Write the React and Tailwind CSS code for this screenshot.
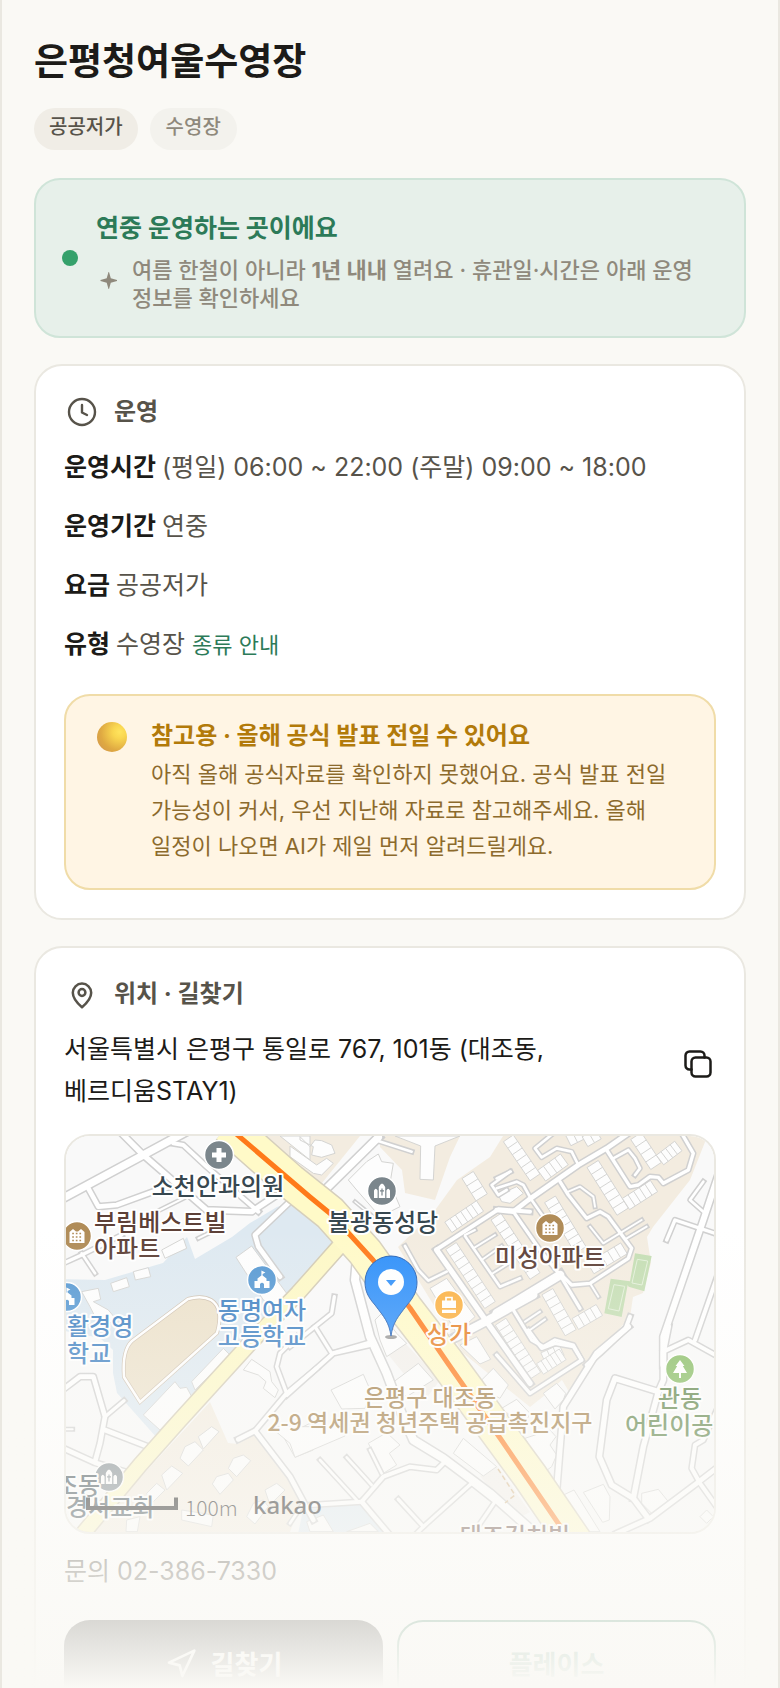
import React from "react";
import { Navigation } from "lucide-react";

/* ---------- Map data: each sheet has its own origin, three units per pixel ---------- */

const SHEETS = {
  A: "translate(50 1120) scale(0.33333)",
  B: "translate(290 1120) scale(0.33333)",
  C: "translate(500 1120) scale(0.33333)",
  D: "translate(50 1330) scale(0.33333)",
  E: "translate(290 1330) scale(0.33333)",
  F: "translate(500 1330) scale(0.33333)",
};

const ROADS = [
  ["A", 32, "M40 234L280 105L400 40"],
  ["A", 26, "M215 40L280 105L470 270L605 275L680 225"],
  ["A", 22, "M370 70L400 75L470 140L625 275"],
  ["A", 24, "M115 205L145 260L200 255L310 215L360 200"],
  ["A", 24, "M725 240L615 345L625 380L690 470"],
  ["A", 20, "M40 430L95 405L215 345"],
  ["A", 18, "M95 400L135 460"],
  ["A", 16, "M330 270L400 235"],
  ["A", 16, "M445 355L500 328"],
  ["B", 32, "M265 52L105 210"],
  ["B", 18, "M255 60L365 95"],
  ["B", 18, "M345 378L385 450L415 482L470 455"],
  ["B", 18, "M660 155L605 195L625 225L650 210"],
  ["B", 26, "M440 390L590 605L720 790"],
  ["B", 22, "M440 388L625 268L720 275"],
  ["B", 18, "M525 348L630 500L690 475"],
  ["B", 16, "M525 345L555 330"],
  ["B", 16, "M550 385L615 345"],
  ["B", 16, "M575 420L635 378"],
  ["B", 16, "M605 462L660 428"],
  ["B", 34, "M730 525L580 608L500 650"],
  ["B", 20, "M0 680L75 620L125 580L133 530"],
  ["B", 20, "M75 620L125 700L245 665"],
  ["B", 14, "M195 245L250 290"],
  ["C", 24, "M-10 270L40 275L85 240L235 135L320 85L385 40"],
  ["C", 18, "M155 44L105 85L125 112L170 85L215 95L235 135"],
  ["C", 18, "M-10 175L32 155"],
  ["C", 18, "M-10 205L50 185L70 195L95 240L130 290"],
  ["C", 20, "M320 90L390 200L415 195L450 170L475 172L490 190L565 150L580 100L545 40"],
  ["C", 18, "M340 115L385 90L405 115L420 145L405 165"],
  ["C", 20, "M180 185L205 225L260 295L300 275L325 290L395 385L385 415L270 490L215 495L180 460"],
  ["C", 16, "M205 215L240 200L280 230L285 260"],
  ["C", 16, "M270 320L310 370L425 300"],
  ["C", 16, "M375 358L440 320"],
  ["C", 20, "M40 275L120 390L180 465"],
  ["C", 36, "M-10 580L180 465"],
  ["C", 20, "M180 465L240 565"],
  ["C", 16, "M270 490L295 530"],
  ["C", 20, "M40 570L95 660L130 680L165 660L220 675L245 720"],
  ["C", 16, "M75 605L120 575"],
  ["C", 16, "M90 630L135 598"],
  ["C", 22, "M390 590L375 630L300 700L260 735"],
  ["C", 18, "M610 185L570 240L615 280"],
  ["C", 28, "M650 180L610 300L490 650L490 735"],
  ["C", 20, "M500 360L525 300L650 342"],
  ["C", 22, "M655 460L585 660"],
  ["C", 22, "M490 695L565 660L655 710"],
  ["D", 24, "M40 178L90 140L130 140L165 260L150 340L135 395"],
  ["D", 20, "M165 260L222 212"],
  ["D", 24, "M165 300L320 360"],
  ["D", 24, "M40 355L135 398L240 430"],
  ["D", 16, "M40 298L68 298"],
  ["D", 24, "M565 328L615 303L720 440L790 570"],
  ["D", 22, "M615 303L710 190L800 115"],
  ["D", 20, "M710 190L680 110L690 70L740 20"],
  ["D", 18, "M720 580L760 520"],
  ["E", 34, "M200 -205L195 -150L240 20L290 130L335 250L370 330L460 385L600 490L730 605"],
  ["E", 22, "M-10 195L130 70L240 45"],
  ["E", 18, "M90 390L200 510"],
  ["E", 18, "M170 382L245 465"],
  ["E", 18, "M240 360L275 430"],
  ["E", 22, "M60 525L215 515L280 440L360 410L440 420L465 395"],
  ["E", 24, "M215 515L295 610"],
  ["E", 20, "M325 508L400 590L545 460"],
  ["E", 20, "M380 610L400 590"],
  ["E", 20, "M545 460L615 515L550 610"],
  ["F", 26, "M385 -10L290 70L190 230L170 480"],
  ["F", 26, "M505 -10L490 65L490 150L475 185L430 350L400 505"],
  ["F", 26, "M475 185L345 145L320 210L298 380L335 465L400 505L445 565"],
  ["F", 24, "M350 610L450 565L590 460L655 410"],
  ["F", 22, "M655 230L610 330L585 345L575 415L600 460L650 530"],
  ["F", 20, "M-10 75L90 190L245 90L220 50L165 40L125 55L85 0"],
];

const BUILDINGS = [
  ["A", "335,390 400,355 410,385 345,415"],
  ["A", "250,455 295,443 302,470 256,480"],
  ["A", "182,490 230,473 238,500 190,515"],
  ["A", "558,412 605,378 710,520 690,560 640,540"],
  ["A", "95,515 145,505 152,538 130,545 175,570 200,600 150,620 120,560"],
  ["A", "690,48 780,48 780,120"],
  ["B", "30,50 60,80 75,60 95,62 125,75 135,100 95,112 65,105 70,80 30,60"],
  ["B", "0,78 80,135 110,115 130,130 95,165 70,160 0,110"],
  ["B", "175,180 230,125 265,102 275,125 310,130 300,190 330,260 270,290 200,210"],
  ["B", "315,48 510,48 435,78 430,180 390,178 392,78"],
  ["B", "420,505 470,475 555,590 500,640"],
  ["B", "625,225 680,200 700,220 660,250 635,245"],
  ["B", "255,600 275,580 320,640 350,670 290,710 270,660"],
  ["D", "280,255 375,155 390,175 410,172 425,200 330,300"],
  ["D", "425,155 520,55 540,75 435,180"],
  ["D", "580,120 605,88 660,125 665,155 685,180 675,203 640,175 648,155 625,135"],
  ["D", "700,320 780,280 790,360 735,382"],
  ["D", "445,320 485,290 507,305 460,357"],
  ["D", "390,385 405,350 435,335 460,360 415,408"],
  ["D", "335,435 365,408 398,430 350,480"],
  ["D", "290,490 320,460 345,480 305,520"],
  ["D", "535,415 550,385 580,375 602,392 560,440"],
  ["D", "487,462 500,440 535,430 550,450 510,493"],
  ["D", "645,480 680,460 705,480 660,525"],
  ["D", "590,560 610,520 640,510 655,530 615,582"],
  ["D", "395,540 490,555 485,590 395,570"],
  ["D", "230,570 270,560 262,605 228,605"],
  ["E", "123,180 220,133 245,190 225,235 155,237"],
  ["E", "-60,290 0,340 15,382 165,318 160,290"],
  ["E", "235,340 290,308 330,345 298,370 320,405 280,430"],
  ["E", "50,575 100,555 130,605 60,605"],
  ["E", "170,605 240,580 265,605"],
  ["E", "490,370 520,325 620,410 580,438"],
  ["E", "305,160 385,100 430,150 350,200"],
  ["E", "510,45 560,20 602,88 570,102"],
  ["E", "575,150 610,115 655,165 630,205 600,190"],
  ["E", "635,235 680,208 720,250 700,290"],
  ["F", "130,190 170,160 197,190 190,210 165,237"],
  ["F", "250,487 310,463 330,500 328,570 308,577"],
  ["F", "180,500 222,480 300,605 240,605"],
  ["F", "425,490 475,478 505,515 455,550 425,520"],
  ["F", "75,325 150,300 168,320 150,345 170,375 155,410 135,425"],
  ["F", "600,560 620,540 640,560 620,580"],
];

/* sheet, x1, y1, x2, y2, number of houses, depth */
const TERRACES = [
  ["C", 25, 55, 105, 172, 6, 36],
  ["C", 125, 167, 193, 118, 4, 40],
  ["C", 278, 132, 368, 275, 7, 40],
  ["C", 378, 252, 462, 198, 5, 40],
  ["C", 408, 48, 468, 138, 4, 38],
  ["C", 480, 120, 535, 78, 4, 36],
  ["C", 150, 238, 242, 390, 8, 38],
  ["C", 272, 445, 372, 385, 5, 38],
  ["C", 142, 515, 212, 638, 6, 38],
  ["C", 226, 612, 298, 570, 4, 38],
  ["C", 205, 62, 245, 42, 2, 34],
  ["C", 255, 65, 295, 42, 2, 34],
  ["C", -12, 290, 105, 468, 9, 36],
  ["C", 130, 715, 185, 690, 3, 36],
  ["F", 2, -25, 106, 137, 9, 38],
  ["F", 120, 117, 188, 73, 5, 38],
  ["B", 533, 165, 575, 232, 3, 40],
  ["B", 475, 322, 570, 258, 6, 38],
  ["B", 483, 378, 600, 555, 9, 38],
];

function Terrace({ x1, y1, x2, y2, n, depth }) {
  const length = Math.hypot(x2 - x1, y2 - y1);
  const nx = (-(y2 - y1) / length) * (depth / 2);
  const ny = ((x2 - x1) / length) * (depth / 2);
  const walls = [];
  for (let i = 1; i < n; i++) {
    const x = x1 + ((x2 - x1) * i) / n;
    const y = y1 + ((y2 - y1) * i) / n;
    walls.push(`M${x + nx} ${y + ny}L${x - nx} ${y - ny}`);
  }
  return (
    <path
      d={`M${x1 + nx} ${y1 + ny}L${x2 + nx} ${y2 + ny}L${x2 - nx} ${y2 - ny}L${x1 - nx} ${y1 - ny}Z${walls.join("")}`}
    />
  );
}

function Glyph({ kind }) {
  if (kind === "hospital") return <path d="M-2.5-7h5v4.500h4.500v5h-4.500V7h-5V2.500H-7v-5h4.500z" fill="#fff" />;
  if (kind === "apartment")
    return (
      <g>
        <path d="M-7.500 7V-4l3.500-3 3 2.500h2L4-7l3.500 3V7z" fill="#fff" />
        <path d="M-4.800-2.500H6M-4.800 1H6M-4.800 4.500H6" stroke="#b08c58" strokeWidth="1.700" strokeDasharray="1.700 1.900" />
      </g>
    );
  if (kind === "church")
    return (
      <g>
        <path d="M-3.200 7V-4Q0-11 3.200-4V7zM-8 7V-.5Q-6.200-4-4.400-.5V7zM4.400 7V-.5Q6.200-4 8-.5V7z" fill="#fff" />
        <path d="M0-2.500v7M-2-.2h4" stroke="#7b868c" strokeWidth="1.200" />
      </g>
    );
  if (kind === "school")
    return (
      <path
        d="M-7.500 8V1h3v-2.500L-.6-4.500V-9.500l4 2-2.800 1.500v1.500L4.500-1.500V1h3v7H2V4Q0 1.500-2 4v4z"
        fill="#fff"
      />
    );
  if (kind === "bag")
    return (
      <g>
        <path d="M-7-4.500H7V3H-7zM-7 4.800H7V8H-7z" fill="#fff" />
        <path d="M-3-4V-7.500H3V-4" fill="none" stroke="#fff" strokeWidth="1.700" />
      </g>
    );
  return <path d="M0-9l4.500 6H2.800L7 4H1v5h-2V4h-6l4.200-7h-1.700z" fill="#fff" />;
}

const PLACES = [
  ["hospital", 219, 1155, "#7b868c"],
  ["apartment", 77, 1236, "#b08c58"],
  ["school", 262, 1280, "#5799d3"],
  ["school", 67, 1297, "#5799d3"],
  ["church", 382, 1191, "#7b868c"],
  ["apartment", 550, 1228, "#b08c58"],
  ["bag", 449, 1305, "#fbb040"],
  ["tree", 680, 1369, "#86bc62"],
  ["church", 109, 1477, "#7b868c"],
];

/* text, x, baseline, colour, anchor, size */
const LABELS = [
  ["소천안과의원", 218, 1195, "#37474f", "middle", 24],
  ["부림베스트빌", 94, 1231, "#5d4037", "start", 24],
  ["아파트", 94, 1257, "#5d4037", "start", 24],
  ["불광동성당", 383, 1231, "#37474f", "middle", 24],
  ["미성아파트", 550, 1266, "#5d4037", "middle", 24],
  ["동명여자", 262, 1319, "#3d80c2", "middle", 24],
  ["고등학교", 262, 1345, "#3d80c2", "middle", 24],
  ["활경영", 67, 1335, "#3d80c2", "start", 24],
  ["학교", 67, 1362, "#3d80c2", "start", 24],
  ["상가", 449, 1343, "#e67e22", "middle", 24],
  ["은평구 대조동", 430, 1406, "#a07c46", "middle", 23],
  ["2-9 역세권 청년주택 공급촉진지구", 430, 1431, "#a07c46", "middle", 23],
  ["관동", 680, 1407, "#5c8246", "middle", 24],
  ["어린이공", 625, 1434, "#5c8246", "start", 24],
  ["조동", 56, 1494, "#37474f", "start", 24],
  ["경서교회", 66, 1516, "#37474f", "start", 24],
  ["대조김치빌", 515, 1545, "#5d4037", "middle", 24],
];

const MAIN_ROAD = "M228 1126L290 1181L330 1213L365 1252L405 1308L445 1360L530 1476L575 1542";
const SIDE_ROAD = "M345 1240L298 1293L252 1341L180 1420L140 1465L76 1542";

function LocationMap() {
  return (
    <svg
      viewBox="66 1136 648 396"
      preserveAspectRatio="xMidYMid slice"
      className="block h-full w-full font-['Noto_Sans_CJK_KR',sans-serif]"
      role="img"
      aria-label="지도"
    >
      <rect x="0" y="1100" width="800" height="460" fill="#f9f9f9" />
      <g fill="#f3ece0">
        <polygon points="267,1136 360,1136 322,1183 290,1157" />
        <polygon points="380,1136 460,1136 450,1157 435,1200 405,1193 402,1170 380,1147" />
        <polygon points="503,1136 490,1157 457,1180 433,1213 398,1247 463,1353 530,1407 545,1395 562,1380 572,1397 603,1347 630,1317 633,1297 643,1293 651,1263 647,1237 653,1227 690,1180 705,1142 705,1136" />
        <polygon points="210,1402 228,1443 238,1444 255,1432 303,1497 290,1532 90,1532" />
      </g>
      <polygon points="387,1353 402,1340 440,1380 425,1400" fill="#f3f0ec" />
      <polygon points="480,1476 497,1466 530,1512 515,1520" fill="#f3f0ec" />
      <g fill="#dee9f1">
        <polygon points="60,1279 105,1280 163,1263 187,1237 195,1259 232,1237 250,1223 277,1207 290,1202 310,1208 338,1242 290,1295 157,1438 117,1393 113,1373 113,1350 100,1338 60,1330" />
        <polygon points="303,1510 330,1507 362,1502 385,1534 298,1534" />
      </g>
      <path
        d="M188 1299Q202 1295 211 1300Q224 1308 217 1333L140 1402L124 1377Q122 1350 132 1341Z"
        fill="#ece1ca"
        stroke="#cdbfae"
        strokeWidth="4"
      />
      <path
        d="M188 1299Q202 1295 211 1300Q224 1308 217 1333L140 1402L124 1377Q122 1350 132 1341Z"
        fill="none"
        stroke="#fff"
        strokeWidth="2.500"
      />
      <g fill="#fdfdfd" stroke="#d4d4d2" strokeWidth="3">
        {BUILDINGS.map(([sheet, points], i) => (
          <polygon key={i} points={points} transform={SHEETS[sheet]} />
        ))}
        {TERRACES.map(([sheet, x1, y1, x2, y2, n, depth], i) => (
          <g key={i} transform={SHEETS[sheet]}>
            <Terrace x1={x1} y1={y1} x2={x2} y2={y2} n={n} depth={depth} />
          </g>
        ))}
      </g>
      <g fill="none" strokeLinejoin="round">
        {ROADS.map(([sheet, width, d], i) => (
          <path key={i} d={d} transform={SHEETS[sheet]} stroke="#d0d0d0" strokeWidth={width - 1} strokeLinecap="square" />
        ))}
        {ROADS.map(([sheet, width, d], i) => (
          <path key={i} d={d} transform={SHEETS[sheet]} stroke="#fff" strokeWidth={width - 10} strokeLinecap="round" />
        ))}
        <path d={SIDE_ROAD} stroke="#d3cbb5" strokeWidth="17" />
        <path d={MAIN_ROAD} stroke="#d6cfbc" strokeWidth="37" />
        <path d={SIDE_ROAD} stroke="#fdf8c6" strokeWidth="14" />
        <path d={MAIN_ROAD} stroke="#fffac8" strokeWidth="34" />
        <path d="M227 1126L310 1197L332 1215L373 1260L410 1308L447 1362L500 1438L571 1542" stroke="#ff7a1a" strokeWidth="5" />
        <path d="M498 1469L515 1495L505 1503" stroke="#d6b78a" strokeWidth="1.500" strokeDasharray="5 3" />
      </g>
      <g transform={SHEETS.C} fill="#c5deb4">
        <polygon points="405,400 455,408 433,514 386,500 383,495 365,591 313,580 332,476 390,484" />
        <g fill="none" stroke="#e4f0da" strokeWidth="3">
          <polygon points="412,418 443,423 426,495 396,489" />
          <polygon points="342,494 374,499 357,573 325,566" />
        </g>
      </g>
      {PLACES.map(([kind, x, y, colour], i) => (
        <g key={i} transform={`translate(${x} ${y})`}>
          <circle r="14.500" fill={colour} stroke="#fff" strokeWidth="1.500" />
          <Glyph kind={kind} />
        </g>
      ))}
      {LABELS.map(([text, x, y, colour, anchor, size], i) => (
        <text
          key={i}
          x={x}
          y={y}
          fontSize={size}
          fontWeight="500"
          fill={colour}
          textAnchor={anchor}
          stroke="#fff"
          strokeWidth="4"
          strokeLinejoin="round"
          paintOrder="stroke"
        >
          {text}
        </text>
      ))}
      <ellipse cx="391" cy="1337" rx="6" ry="2" fill="#000" opacity="0.400" />
      <path
        d="M391 1336C389 1322 384 1317 375 1305C368 1297 365 1291 365 1282A26 26 0 0 1 417 1282C417 1291 414 1297 407 1305C398 1317 393 1322 391 1336Z"
        fill="#2f90fa"
        stroke="#2460b4"
        strokeWidth="1"
      />
      <circle cx="391" cy="1282" r="13" fill="#fff" />
      <path d="M386 1280h10l-5 6z" fill="#2f90fa" />
      <path d="M88 1497.500V1508H176V1497.500" fill="none" stroke="#111" strokeWidth="4" />
      <text x="185" y="1516" fontSize="21" fontWeight="300" fill="#111">
        100m
      </text>
      <text x="253" y="1514" fontSize="24" fontWeight="500" fill="#111" className="font-['Noto_Sans',sans-serif]">
        kakao
      </text>
    </svg>
  );
}

/* ---------- Icons ---------- */

function ClockIcon() {
  return (
    <svg viewBox="0 0 36 36" className="size-9 shrink-0" fill="none" stroke="currentColor" strokeWidth="2.400" strokeLinecap="round" strokeLinejoin="round" aria-hidden="true">
      <circle cx="18" cy="18" r="13" />
      <path d="M18 11v7.500l5 2.500" />
    </svg>
  );
}

function PinIcon() {
  return (
    <svg viewBox="0 0 36 36" className="size-9 shrink-0" fill="none" stroke="currentColor" strokeWidth="2.500" strokeLinejoin="round" aria-hidden="true">
      <path d="M18 31.300C13 27 8.800 22 8.800 16.800a9.200 9.200 0 0 1 18.400 0C27.200 22 23 27 18 31.300Z" />
      <circle cx="18" cy="16.500" r="3.400" />
    </svg>
  );
}

function CopyIcon() {
  return (
    <svg viewBox="0 0 28 28" className="size-7" fill="none" stroke="currentColor" strokeWidth="2.500" strokeLinecap="round" strokeLinejoin="round" aria-hidden="true">
      <rect x="7.500" y="7.500" width="19" height="19" rx="4" />
      <path d="M7.500 19.500H5.500a4 4 0 0 1-4-4V5.500a4 4 0 0 1 4-4h11a4 4 0 0 1 4 4v2" />
    </svg>
  );
}

function SparkIcon() {
  return (
    <svg viewBox="0 0 24 24" className="mt-3 size-6 shrink-0" fill="currentColor" aria-hidden="true">
      <path d="M13 4L14.800 10.200L21 12V13L14.800 14.800L13 21H12.500L10.700 14.800L4.500 13V12L10.700 10.200L12.500 4Z" />
    </svg>
  );
}

/* ---------- Page ---------- */

function Card({ icon, title, children }) {
  return (
    <section className="rounded-[28px] border-2 border-[#eae8e1] bg-white p-7">
      <h2 className="flex h-9 items-center gap-3.5 text-2xl font-bold text-[#57534a]">
        {icon}
        {title}
      </h2>
      {children}
    </section>
  );
}

function Fact({ label, children }) {
  return (
    <div className="flex items-baseline gap-1.5">
      <dt className="font-bold text-[#1c1b18]">{label}</dt>
      <dd>{children}</dd>
    </div>
  );
}

export default function App() {
  return (
    <div className="relative h-screen overflow-hidden border-x-2 border-[#eae8e1] bg-[#faf9f5] font-['Inter','Noto_Sans_CJK_KR',sans-serif] break-keep text-[#57534a]">
      <main className="flex flex-col px-8 pt-9">
        <h1 className="text-[37px] leading-[52px] font-bold text-[#1c1b18]">은평청여울수영장</h1>
        <div className="mt-5 flex gap-3 text-xl leading-[38px] font-medium">
          <span className="rounded-full bg-[#f0ede6] px-[15px] pb-1">공공저가</span>
          <span className="rounded-full bg-[#f3f2ed] px-4 pb-1 text-[#8f897c]">수영장</span>
        </div>

        <section className="mt-7 flex items-center gap-[18px] rounded-[26px] border-2 border-[#cfe4d8] bg-[#e7f0ea] px-[26px] py-6">
          <span className="size-4 shrink-0 rounded-full bg-[#35a16b]" />
          <div>
            <h2 className="text-[25px] leading-[48px] font-bold text-[#2c7a58]">연중 운영하는 곳이에요</h2>
            <div className="mt-1 flex items-start gap-3 text-[#8f897c]">
              <SparkIcon />
              <p className="text-[22px] leading-7 font-medium">
                여름 한철이 아니라 <strong>1년 내내</strong> 열려요 · 휴관일·시간은 아래 운영 정보를 확인하세요
              </p>
            </div>
          </div>
        </section>

        <div className="mt-[26px] flex flex-col gap-[26px]">
          <Card icon={<ClockIcon />} title="운영">
            <dl className="mt-4 flex flex-col gap-[17px] text-[25px] leading-[42px]">
              <Fact label="운영시간">(평일) 06:00 ~ 22:00 (주말) 09:00 ~ 18:00</Fact>
              <Fact label="운영기간">연중</Fact>
              <Fact label="요금">공공저가</Fact>
              <Fact label="유형">
                수영장{" "}
                <a href="#types" className="text-[22px] text-[#2c7a58]">
                  종류 안내
                </a>
              </Fact>
            </dl>
            <aside className="mt-7 flex gap-6 rounded-[26px] border-2 border-[#f0dca8] bg-[#fff5e4] py-6 pr-8 pl-[31px]">
              <span className="mt-0.5 size-[30px] shrink-0 rounded-full bg-[radial-gradient(circle_at_75%_33%,#ffe45e_0%,#f9d650_22%,#dfa942_62%,#cf9350_100%)]" />
              <div>
                <h3 className="text-2xl leading-8 font-bold text-[#b27a0a]">참고용 · 올해 공식 발표 전일 수 있어요</h3>
                <p className="mt-1 text-[22px] leading-9 text-[#8c6a2c]">
                  아직 올해 공식자료를 확인하지 못했어요. 공식 발표 전일 가능성이 커서, 우선 지난해 자료로 참고해주세요. 올해 일정이 나오면 AI가 제일 먼저 알려드릴게요.
                </p>
              </div>
            </aside>
          </Card>

          <Card icon={<PinIcon />} title="위치 · 길찾기">
            <div className="mt-4 flex items-center justify-between gap-4 text-[25px] leading-[42px] text-[#1c1b18]">
              <p>서울특별시 은평구 통일로 767, 101동 (대조동, 베르디움STAY1)</p>
              <button type="button" aria-label="주소 복사" className="shrink-0 p-1 pb-4">
                <CopyIcon />
              </button>
            </div>
            <div className="mt-[22px] h-[400px] overflow-hidden rounded-[26px] border-2 border-[#eae8e1]">
              <LocationMap />
            </div>
            <p className="mt-4 text-[25px] leading-[42px]">
              문의 <a href="tel:02-386-7330">02-386-7330</a>
            </p>
            <div className="mt-7 grid grid-cols-2 gap-3.5 text-[26px] font-bold">
              <button type="button" className="flex h-[88px] items-center justify-center gap-3.5 rounded-[26px] bg-[#1c1b18] text-white">
                <Navigation className="size-8" strokeWidth={2} aria-hidden="true" />
                길찾기
              </button>
              <button type="button" className="h-[88px] rounded-[26px] border-2 border-[#2c7a58] text-[#2c7a58]">
                플레이스
              </button>
            </div>
          </Card>
        </div>
      </main>
      <div className="pointer-events-none absolute inset-x-0 bottom-0 h-[460px] bg-linear-to-b from-[#faf9f5]/0 to-[#faf9f5]" />
    </div>
  );
}
